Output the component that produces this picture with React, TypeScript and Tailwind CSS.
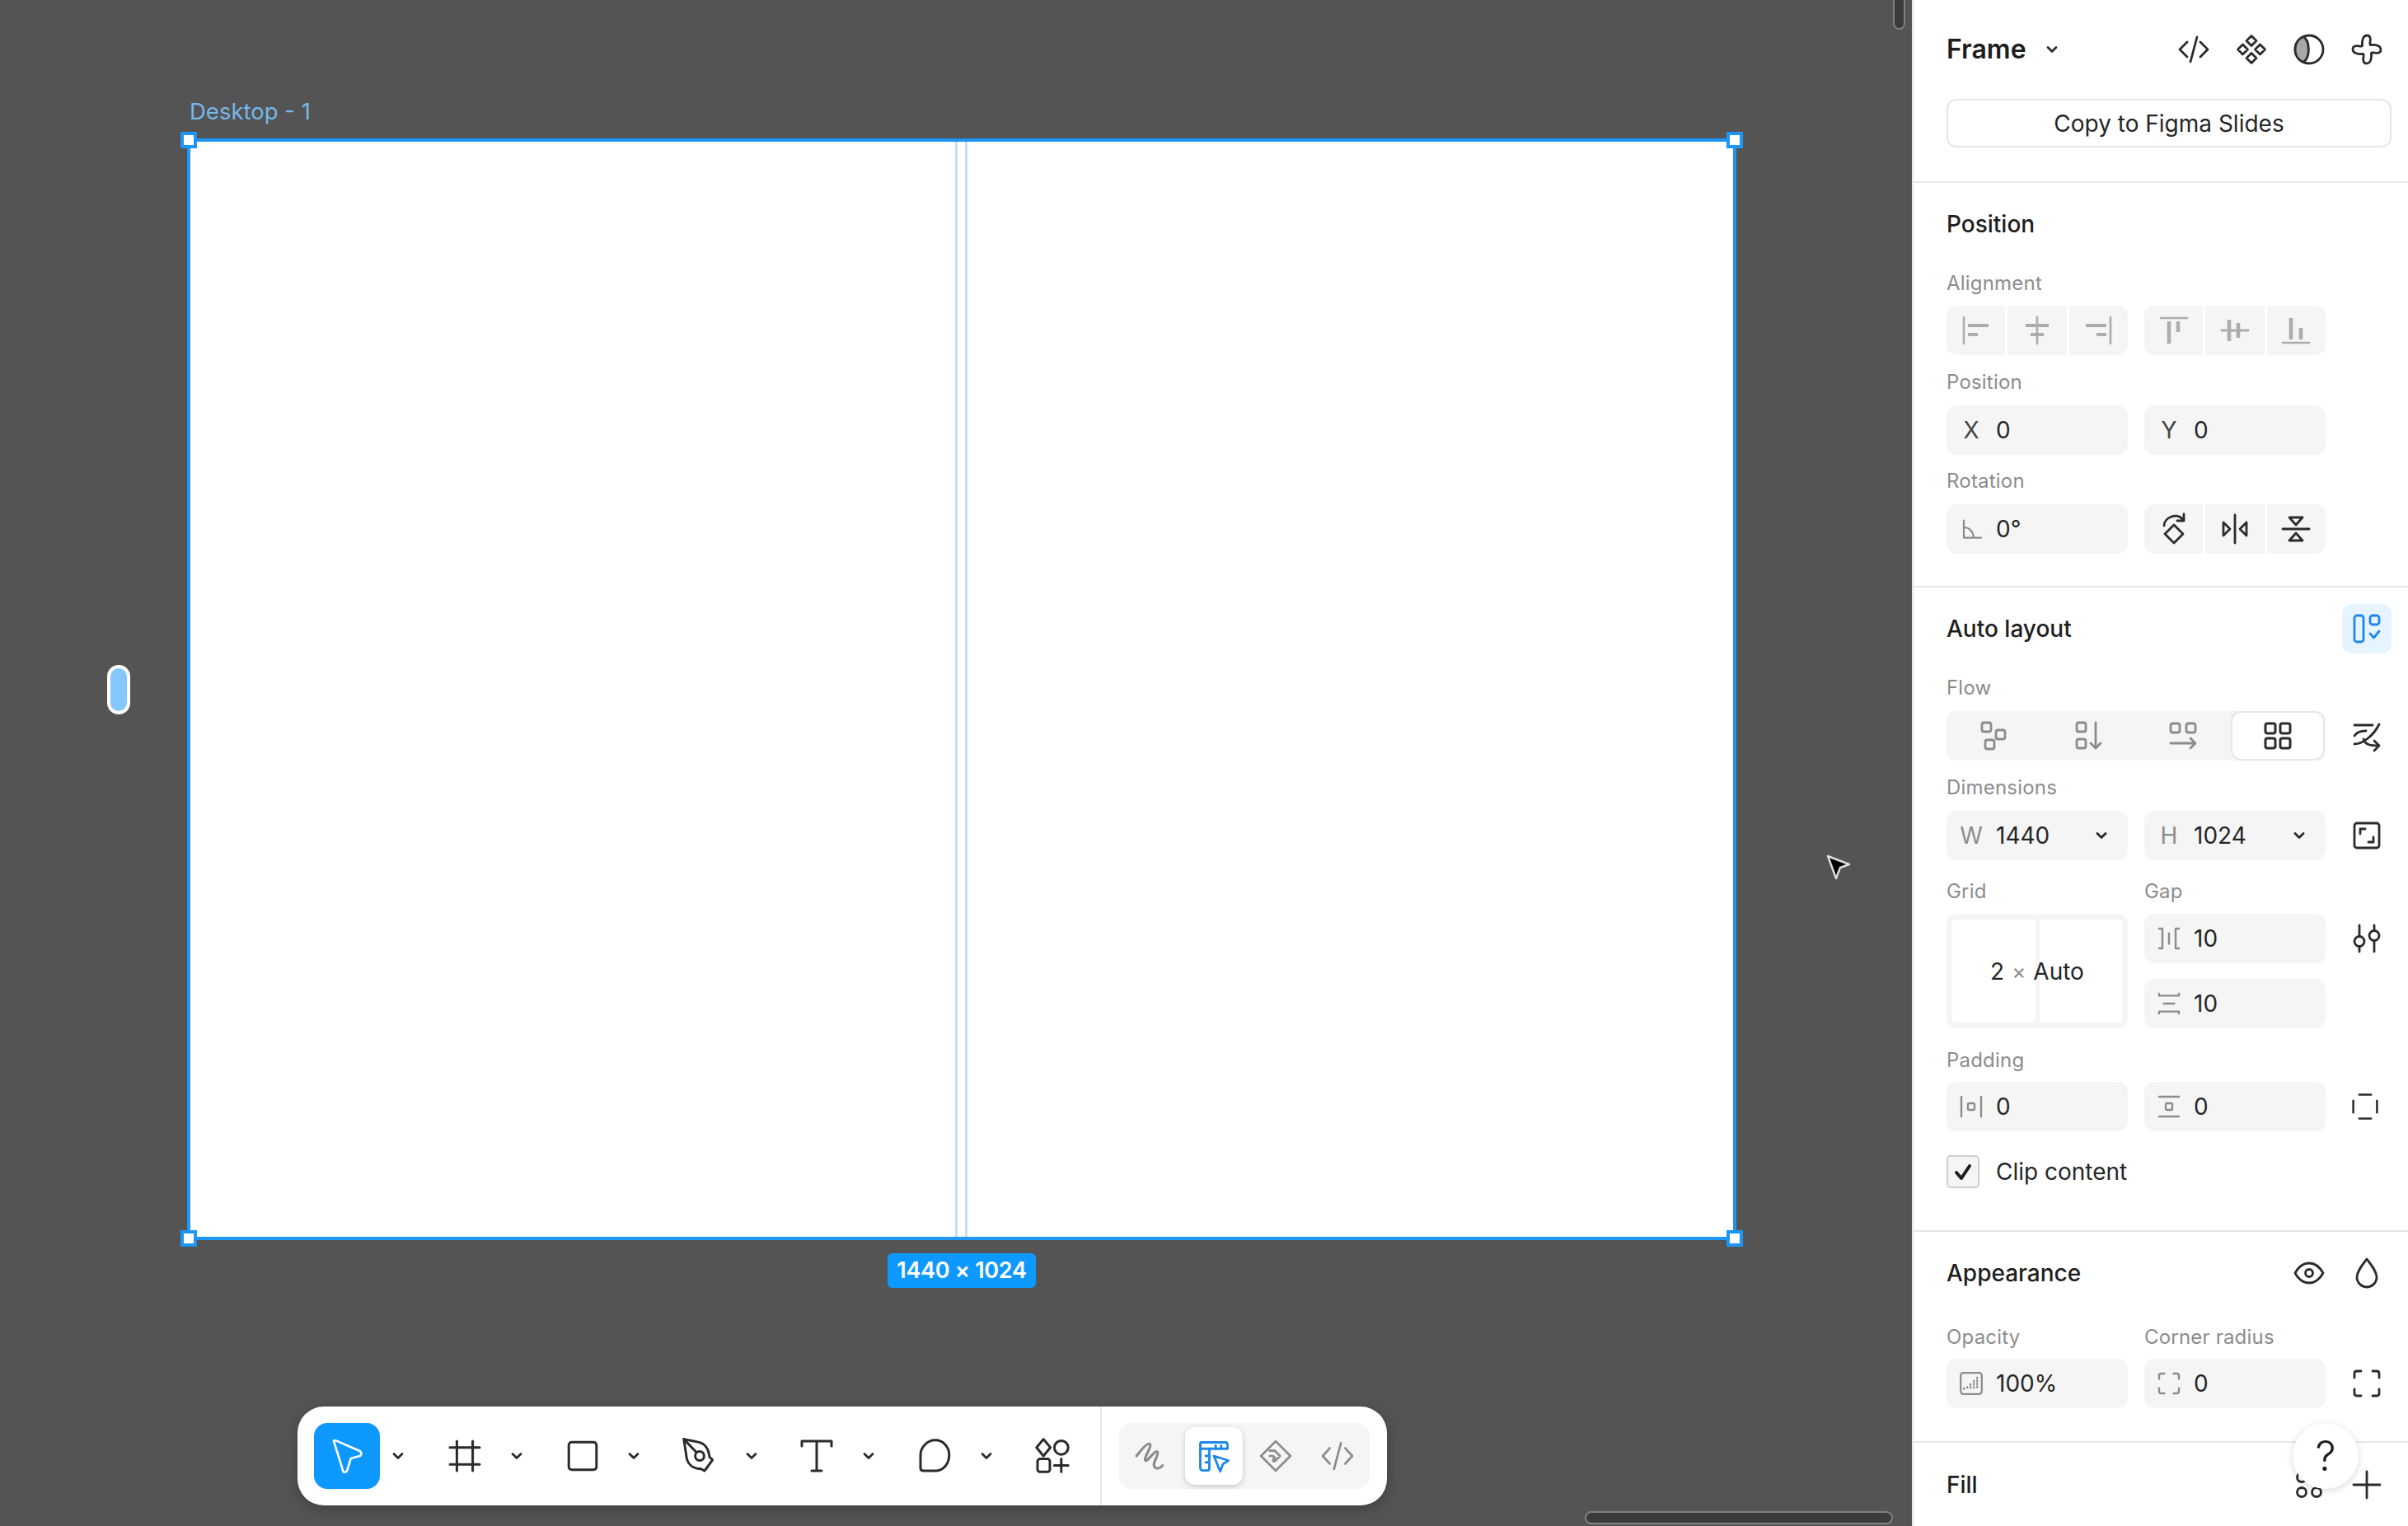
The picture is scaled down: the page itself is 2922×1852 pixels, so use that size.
import type { ReactNode } from "react";

const INK = "#2b2b2b";
const GREY = "#8c8c8c";
const LIGHT = "#adadad";
const BLUE = "#1e88ea";

// wrapper for all the hand drawn icons, drawn on a 40 unit box
function Ico({
  size = 40,
  color = INK,
  width = 2.8,
  children,
}: {
  size?: number;
  color?: string;
  width?: number;
  children: ReactNode;
}) {
  return (
    <svg
      width={size}
      height={size}
      viewBox="0 0 40 40"
      fill="none"
      stroke={color}
      strokeWidth={width}
      strokeLinecap="round"
      strokeLinejoin="round"
      className="shrink-0"
    >
      {children}
    </svg>
  );
}

function Chevron({ color = INK }: { color?: string }) {
  return (
    <svg width="14" height="10" viewBox="0 0 14 10" fill="none" stroke={color} strokeWidth="2.8" strokeLinecap="round" strokeLinejoin="round" className="shrink-0">
      <path d="M2 2.5 L7 7.5 L12 2.5" />
    </svg>
  );
}

function Label({ children }: { children: ReactNode }) {
  return <div className="h-[32px] flex items-center text-[24px] tracking-[0.2px] text-[#8c8c8c]">{children}</div>;
}

function Title({ children }: { children: ReactNode }) {
  return <div className="h-[40px] flex items-center text-[28px] font-[550] text-[#1e1e1e]">{children}</div>;
}

function Field({
  slot,
  value,
  chevron,
}: {
  slot: ReactNode;
  value: string;
  chevron?: boolean;
}) {
  return (
    <div className="w-[220px] h-[60px] shrink-0 flex items-center rounded-[12px] bg-[#f5f5f5]">
      <div className="w-[60px] shrink-0 flex items-center justify-center text-[28px]">{slot}</div>
      <div className="flex-1 text-[28px] text-[#262626]">{value}</div>
      {chevron && (
        <div className="mr-[25px]">
          <Chevron />
        </div>
      )}
    </div>
  );
}

function Segments({ items }: { items: ReactNode[] }) {
  return (
    <div className="w-[220px] h-[60px] shrink-0 flex gap-[3px] rounded-[12px] overflow-hidden">
      {items.map((it, i) => (
        <div key={i} className="flex-1 flex items-center justify-center bg-[#f5f5f5]">
          {it}
        </div>
      ))}
    </div>
  );
}

function Sq({ x, y, s = 10 }: { x: number; y: number; s?: number }) {
  return <rect x={x} y={y} width={s} height={s} rx="2.5" />;
}

function ToolChevron() {
  return (
    <div className="w-[14px] flex justify-center">
      <Chevron />
    </div>
  );
}

export default function App() {
  return (
    <div className="w-[2922px] h-[1852px] flex overflow-hidden bg-[#545454] font-['Inter',sans-serif]">
      {/* Canvas */}
      <div className="relative flex-1 bg-[#545454]">
        <div className="absolute left-[230px] top-[118px] text-[27.5px] leading-[34px] text-[#77b8e9]">Desktop - 1</div>

        <div className="absolute left-[227px] top-[168px] w-[1880px] h-[1337px] bg-white border-[4px] border-[#1e96f5]">
          <div className="absolute left-[928px] top-0 bottom-0 w-[3px] bg-[#bfe0fa]"></div>
          <div className="absolute left-[940px] top-0 bottom-0 w-[3px] bg-[#bfe0fa]"></div>
        </div>

        <div className="absolute left-[219px] top-[160px] w-[20px] h-[20px] bg-white border-[4px] border-[#1e96f5]"></div>
        <div className="absolute left-[2095px] top-[160px] w-[20px] h-[20px] bg-white border-[4px] border-[#1e96f5]"></div>
        <div className="absolute left-[219px] top-[1493px] w-[20px] h-[20px] bg-white border-[4px] border-[#1e96f5]"></div>
        <div className="absolute left-[2095px] top-[1493px] w-[20px] h-[20px] bg-white border-[4px] border-[#1e96f5]"></div>

        <div className="absolute left-[1077px] top-[1521px] w-[180px] h-[42px] flex items-center justify-center pt-[1px] rounded-[6px] bg-[#0d99ff] text-[27px] font-semibold tracking-[-0.3px] text-white">
          1440 × 1024
        </div>

        {/* comment pill */}
        <div className="absolute left-[130px] top-[807px] w-[28px] h-[60px] rounded-full bg-[#85c8ff] border-[4px] border-white"></div>

        {/* cursor */}
        <svg width="44" height="44" viewBox="0 0 44 44" className="absolute left-[2207px] top-[1028px]">
          <path d="M11 11 L37 21 L26 25 L21 38 Z" fill="#000" stroke="#dddddd" strokeWidth="2.5" strokeLinejoin="round" />
        </svg>

        {/* scrollbars */}
        <div className="absolute left-[2297px] top-[-20px] w-[15px] h-[56px] rounded-full bg-[#3b3b3b] border-2 border-[#808080]"></div>
        <div className="absolute left-[1923px] top-[1834px] w-[374px] h-[16px] rounded-full bg-[#3b3b3b] border-[2.5px] border-[#808080]"></div>

        {/* Toolbar */}
        <div className="absolute left-[361px] top-[1707px] w-[1322px] h-[120px] flex items-center rounded-[32px] bg-white shadow-[0_4px_16px_rgba(0,0,0,0.25)]">
          <div className="w-[976px] h-full shrink-0 flex items-center pl-[20px] border-r-2 border-[#e6e6e6]">
            <div className="w-[80px] h-[80px] shrink-0 flex items-center justify-center rounded-[16px] bg-[#0d99ff]">
              <Ico size={48} color="#fff" width={2.2}>
                <path d="M7 6 C6 5 7 3.5 9 4.5 L33 15 C35 16 35 19 33 20 L24 22.5 L20 35 C19 37 16.5 37 16 35 Z" />
              </Ico>
            </div>
            <div className="ml-[15px]">
              <ToolChevron />
            </div>
            <div className="ml-[50px]">
              <Ico size={48} width={2.5}>
                <path d="M12 5 V35 M28 5 V35 M5 11.5 H35 M5 28.5 H35" />
              </Ico>
            </div>
            <div className="ml-[32px]">
              <ToolChevron />
            </div>
            <div className="ml-[49px]">
              <Ico size={48} width={2.5}>
                <rect x="6" y="6" width="28" height="28" rx="3" />
              </Ico>
            </div>
            <div className="ml-[31px]">
              <ToolChevron />
            </div>
            <div className="ml-[49px]">
              <Ico size={48} width={2.5}>
                <path d="M4 3 L14 5 C19 6 26 6 29 16 L30 21 L33 24 L25 35 L21 33 C15 33 9 30 7 23 Z" />
                <path d="M4 3 L16.5 16" />
                <circle cx="20" cy="20" r="4.5" />
              </Ico>
            </div>
            <div className="ml-[32px]">
              <ToolChevron />
            </div>
            <div className="ml-[48px]">
              <Ico size={48} width={2.5}>
                <path d="M5 10 V5 H35 V10 M20 5 V35 M15 35 H25" />
              </Ico>
            </div>
            <div className="ml-[32px]">
              <ToolChevron />
            </div>
            <div className="ml-[50px]">
              <Ico size={48} width={2.5}>
                <path d="M20 4 C28 4 34 11 34 19 C34 28 28 35 20 35 H8 C6 35 5 34 5 32 V19 C5 11 12 4 20 4 Z" />
              </Ico>
            </div>
            <div className="ml-[31px]">
              <ToolChevron />
            </div>
            <div className="ml-[49px]">
              <Ico size={48} width={2.5}>
                <path d="M11 3 L18 11.5 L11 20 L4 11.5 Z" />
                <circle cx="29" cy="11.5" r="7" />
                <rect x="5" y="23" width="12.5" height="13" rx="2.5" />
                <path d="M29 23 V36 M22 29.5 H36" />
              </Ico>
            </div>
          </div>

          <div className="ml-[21px] w-[304px] h-[80px] shrink-0 flex items-center rounded-[16px] bg-[#f5f5f5]">
            <div className="w-[78px] flex justify-center">
              <Ico size={42} color={GREY} width={3}>
                <path d="M3 20 C9 12 15 5 18 6 C22 8 11 22 13 25 C15 28 24 13 27 15 C30 18 20 29 24 33 C26 35 30 35 33 31" />
              </Ico>
            </div>
            <div className="w-[70px] h-[70px] ml-[2px] flex items-center justify-center rounded-[12px] bg-white shadow-[0_2px_6px_rgba(0,0,0,0.18)]">
              <Ico size={44} color={BLUE} width={2.6}>
                <path d="M6 5 H33 C35 5 35 6 35 8 V12 H15 V34 C15 35 14 36 12 36 H8 C6 36 5 35 5 33 V7 C5 6 5 5 6 5 Z" />
                <path d="M5 12 H15 M22 12 V8.5 M28 12 V8.5 M15 20 H11 M15 27 H11" />
                <path d="M20 20 L36 25 L30 29 L27 37 Z" />
              </Ico>
            </div>
            <div className="w-[80px] flex justify-center">
              <Ico size={42} color={GREY} width={2.6}>
                <path d="M20 3 L37 20 L20 37 L3 20 Z" />
                <path d="M13 14 H19 L25 20 L19 26 H17 M13 20 H17 L19 22 L17 24" />
              </Ico>
            </div>
            <div className="w-[70px] flex justify-center">
              <Ico size={42} color={GREY} width={2.6}>
                <path d="M11 11 L3 20 L11 29 M29 11 L37 20 L29 29 M24 5 L16 35" />
              </Ico>
            </div>
          </div>
        </div>
      </div>

      {/* Right panel */}
      <aside className="relative w-[602px] h-[1852px] shrink-0 bg-white border-l-2 border-[#e6e6e6] overflow-hidden">
        {/* Header */}
        <section className="h-[222px] pt-[40px] px-[40px] pr-[20px] border-b-2 border-[#e6e6e6]">
          <div className="h-[40px] flex items-center">
            <span className="text-[32px] font-semibold text-[#1e1e1e]">Frame</span>
            <div className="ml-[24px]">
              <Chevron />
            </div>
            <div className="ml-auto flex items-center gap-[30px] pr-[10px]">
              <Ico>
                <path d="M12 11 L3 20 L12 29 M28 11 L37 20 L28 29 M24 5 L16 35" />
              </Ico>
              <Ico>
                <path d="M20 3.5 L26 9.5 L20 15.5 L14 9.5 Z M30.5 14 L36.5 20 L30.5 26 L24.5 20 Z M20 24.5 L26 30.5 L20 36.5 L14 30.5 Z M9.5 14 L15.5 20 L9.5 26 L3.5 20 Z" />
              </Ico>
              <Ico>
                <circle cx="20" cy="20" r="17" />
                <path d="M13 4.5 C21.5 10 21.5 30 13 35.5 C7 33 3 27 3 20 C3 13 7 7 13 4.5 Z" fill="#a8a8a8" />
              </Ico>
              <Ico>
                {[0, 90, 180, 270].map((r) => (
                  <path key={r} transform={`rotate(${r} 20 20)`} d="M14.5 15 C14 10 15 3 20.5 3 C24 3 25 7 24 11 C23.7 13 23.5 14.5 25 14.5" />
                ))}
              </Ico>
            </div>
          </div>
          <div className="mt-[40px] h-[59px] flex items-center justify-center rounded-[12px] border-2 border-[#e6e6e6] text-[28px] text-[#262626]">
            Copy to Figma Slides
          </div>
        </section>

        {/* Position */}
        <section className="h-[491px] pt-[30px] px-[40px] border-b-2 border-[#e6e6e6]">
          <Title>Position</Title>
          <div className="mt-[36px]">
            <Label>Alignment</Label>
          </div>
          <div className="mt-[11px] flex gap-[20px]">
            <Segments
              items={[
                <Ico key="l" color={LIGHT} width={2.6}>
                  <path d="M5 4 V36" />
                  <path d="M10 14 H35 M10 25 H22" strokeWidth="4" strokeLinecap="butt" />
                </Ico>,
                <Ico key="c" color={LIGHT} width={2.8}>
                  <path d="M20 4 V36" />
                  <path d="M6 14 H34 M12 25 H28" strokeWidth="4" strokeLinecap="butt" />
                </Ico>,
                <Ico key="r" color={LIGHT} width={2.6}>
                  <path d="M35 4 V36" />
                  <path d="M5 14 H30 M18 25 H30" strokeWidth="4" strokeLinecap="butt" />
                </Ico>,
              ]}
            />
            <Segments
              items={[
                <Ico key="t" color={LIGHT} width={2.6}>
                  <path d="M4 5 H36" />
                  <path d="M14 9 V36 M25 9 V22" strokeWidth="4.6" strokeLinecap="butt" />
                </Ico>,
                <Ico key="m" color={LIGHT} width={2.8}>
                  <path d="M4 20 H36" />
                  <path d="M13 7 V33 M24 11 V29" strokeWidth="4.6" strokeLinecap="butt" />
                </Ico>,
                <Ico key="b" color={LIGHT} width={2.6}>
                  <path d="M4 35 H36" />
                  <path d="M14 5 V31 M26 17 V31" strokeWidth="4.6" strokeLinecap="butt" />
                </Ico>,
              ]}
            />
          </div>
          <div className="mt-[17px]">
            <Label>Position</Label>
          </div>
          <div className="mt-[12px] flex gap-[20px]">
            <Field slot={<span className="text-[#444444]">X</span>} value="0" />
            <Field slot={<span className="text-[#444444]">Y</span>} value="0" />
          </div>
          <div className="mt-[16px]">
            <Label>Rotation</Label>
          </div>
          <div className="mt-[12px] flex gap-[20px]">
            <Field
              slot={
                <Ico size={30} color={GREY} width={3}>
                  <path d="M8 6 V34 H36 M8 17 C18 18 23 25 24 34" />
                </Ico>
              }
              value="0°"
            />
            <Segments
              items={[
                <Ico key="rot">
                  <path d="M20 15 L31 26 L20 37 L9 26 Z" />
                  <path d="M8 16 C8 6 24 -1 31 9 M32 2 L32 10 L24 10" />
                </Ico>,
                <Ico key="fh">
                  <path d="M20 3 V37 M6 12 L14 20 L6 28 Z M34 12 L26 20 L34 28 Z" />
                </Ico>,
                <Ico key="fv">
                  <path d="M4 20 H36 M12 6 H28 L20 15 Z M12 34 H28 L20 25 Z" />
                </Ico>,
              ]}
            />
          </div>
        </section>

        {/* Auto layout */}
        <section className="h-[782px] pt-[20px] pl-[40px] pr-[20px] border-b-2 border-[#e6e6e6]">
          <div className="h-[60px] flex items-center justify-between">
            <Title>Auto layout</Title>
            <div className="w-[60px] h-[60px] flex items-center justify-center rounded-[12px] bg-[#e5f4ff]">
              <Ico color={BLUE} width={2.8}>
                <rect x="5" y="4" width="11" height="32" rx="3" />
                <rect x="24" y="4" width="11" height="11" rx="3" />
                <path d="M24 26 L28.5 31 L35 23" />
              </Ico>
            </div>
          </div>
          <div className="mt-[26px]">
            <Label>Flow</Label>
          </div>
          <div className="mt-[12px] flex items-center">
            <div className="w-[460px] h-[60px] shrink-0 flex rounded-[12px] bg-[#f5f5f5]">
              <div className="w-[115px] flex items-center justify-center">
                <Ico color={GREY}>
                  <Sq x={5} y={4} s={11} />
                  <Sq x={22} y={13} s={11} />
                  <Sq x={9} y={25} s={11} />
                </Ico>
              </div>
              <div className="w-[115px] flex items-center justify-center">
                <Ico color={GREY}>
                  <Sq x={5} y={4} s={11} />
                  <Sq x={5} y={24} s={11} />
                  <path d="M28 4 V35 M22 29 L28 35 L34 29" />
                </Ico>
              </div>
              <div className="w-[115px] flex items-center justify-center">
                <Ico color={GREY}>
                  <Sq x={4} y={5} s={11} />
                  <Sq x={23} y={5} s={11} />
                  <path d="M4 29 H34 M28 23 L34 29 L28 35" />
                </Ico>
              </div>
              <div className="w-[114px] flex items-center justify-center rounded-[12px] bg-white border-2 border-[#e6e6e6]">
                <Ico width={3}>
                  <Sq x={5} y={5} s={12} />
                  <Sq x={23} y={5} s={12} />
                  <Sq x={5} y={23} s={12} />
                  <Sq x={23} y={23} s={12} />
                </Ico>
              </div>
            </div>
            <div className="ml-[30px]">
              <Ico>
                <path d="M5 7 H27 M5 30 C15 30 28 20 35 6 M5 20 C8 15 14 14 19 14 M16 24 C18 30 22 32 35 32 M29 26 L35 32 L29 38" />
              </Ico>
            </div>
          </div>
          <div className="mt-[17px]">
            <Label>Dimensions</Label>
          </div>
          <div className="mt-[12px] flex items-center gap-[20px]">
            <Field slot={<span className="text-[#8c8c8c]">W</span>} value="1440" chevron />
            <Field slot={<span className="text-[#8c8c8c]">H</span>} value="1024" chevron />
            <div className="ml-[10px]">
              <Ico>
                <rect x="5" y="5" width="30" height="30" rx="3" />
                <path d="M12 18 V12 H18 M28 22 V28 H22" />
              </Ico>
            </div>
          </div>
          <div className="mt-[22px] flex gap-[20px]">
            <div className="w-[220px]">
              <Label>Grid</Label>
            </div>
            <Label>Gap</Label>
          </div>
          <div className="mt-[11px] flex gap-[20px]">
            {/* grid preview */}
            <div className="relative w-[220px] h-[139px] shrink-0 flex gap-[5px] p-[7px] rounded-[12px] bg-[#f5f5f5]">
              <div className="flex-1 rounded-[4px] bg-white"></div>
              <div className="flex-1 rounded-[4px] bg-white"></div>
              <div className="absolute inset-0 flex items-center justify-center gap-[9px] text-[28px] text-[#262626]">
                <span>2</span>
                <span className="text-[26px] text-[#8c8c8c]">×</span>
                <span>Auto</span>
              </div>
            </div>
            <div className="w-[220px] flex flex-col justify-between">
              <Field
                slot={
                  <Ico size={32} color={GREY} width={3}>
                    <path d="M5 5 H10 V35 H5 M35 5 H30 V35 H35 M20 12 V28" />
                  </Ico>
                }
                value="10"
              />
              <Field
                slot={
                  <Ico size={32} color={GREY} width={3}>
                    <path d="M5 5 V8 H35 V5 M5 35 V32 H35 V35 M12 20 H28" />
                  </Ico>
                }
                value="10"
              />
            </div>
            <div className="ml-[10px] pt-[10px]">
              <Ico>
                <path d="M11 4 V17 M11 30 V36 M29 4 V10 M29 23 V36" />
                <circle cx="11" cy="23.5" r="6" />
                <circle cx="29" cy="16.5" r="6" />
              </Ico>
            </div>
          </div>
          <div className="mt-[23px]">
            <Label>Padding</Label>
          </div>
          <div className="mt-[10px] flex items-center gap-[20px]">
            <Field
              slot={
                <Ico size={32} color={GREY} width={3}>
                  <path d="M5 5 V35 M35 5 V35" />
                  <rect x="15" y="15" width="10" height="10" rx="1.5" />
                </Ico>
              }
              value="0"
            />
            <Field
              slot={
                <Ico size={32} color={GREY} width={3}>
                  <path d="M5 5 H35 M5 35 H35" />
                  <rect x="15" y="15" width="10" height="10" rx="1.5" />
                </Ico>
              }
              value="0"
            />
            <div className="ml-[10px]">
              <Ico size={36}>
                <path d="M12 4 H28 M12 36 H28 M4 12 V28 M36 12 V28" />
              </Ico>
            </div>
          </div>
          <div className="mt-[28px] flex items-center">
            <div className="w-[40px] h-[40px] flex items-center justify-center rounded-[5px] bg-[#f5f5f5] border-2 border-[#cfcfcf]">
              <svg width="24" height="24" viewBox="0 0 24 24" fill="none" stroke="#1e1e1e" strokeWidth="4" strokeLinecap="round" strokeLinejoin="round">
                <path d="M4 13 L10 20 L20 5" />
              </svg>
            </div>
            <span className="ml-[20px] text-[28px] text-[#262626]">Clip content</span>
          </div>
        </section>

        {/* Appearance */}
        <section className="h-[256px] pt-[30px] pl-[40px] pr-[20px] border-b-2 border-[#e6e6e6]">
          <div className="h-[40px] flex items-center justify-between">
            <Title>Appearance</Title>
            <div className="flex items-center gap-[30px] pr-[10px]">
              <Ico>
                <path d="M3 20 C8 11 14 8 20 8 C26 8 32 11 37 20 C32 29 26 32 20 32 C14 32 8 29 3 20 Z" />
                <circle cx="20" cy="20" r="4.5" />
              </Ico>
              <Ico>
                <path d="M20 3 C26 11 32 18 32 25 C32 32 26 37 20 37 C14 37 8 32 8 25 C8 18 14 11 20 3 Z" />
              </Ico>
            </div>
          </div>
          <div className="mt-[42px] flex gap-[20px]">
            <div className="w-[220px]">
              <Label>Opacity</Label>
            </div>
            <Label>Corner radius</Label>
          </div>
          <div className="mt-[10px] flex items-center gap-[20px]">
            <Field
              slot={
                <Ico size={32} color={GREY} width={2.8}>
                  <rect x="4" y="4" width="32" height="32" rx="4" />
                  <path d="M29 11 V29 M24 16 V29 M19 21 V29 M14 25 V29 M9 27 V29" strokeDasharray="1.5 3" />
                </Ico>
              }
              value="100%"
            />
            <Field
              slot={
                <Ico size={32} color={GREY} width={3}>
                  <path d="M5 13 V8 C5 6 6 5 8 5 H13 M27 5 H32 C34 5 35 6 35 8 V13 M35 27 V32 C35 34 34 35 32 35 H27 M13 35 H8 C6 35 5 34 5 32 V27" />
                </Ico>
              }
              value="0"
            />
            <div className="ml-[10px]">
              <Ico>
                <path d="M5 13 V8 C5 6 6 5 8 5 H13 M27 5 H32 C34 5 35 6 35 8 V13 M35 27 V32 C35 34 34 35 32 35 H27 M13 35 H8 C6 35 5 34 5 32 V27" />
              </Ico>
            </div>
          </div>
        </section>

        {/* Fill */}
        <section className="pt-[31px] pl-[40px] pr-[20px]">
          <div className="h-[40px] flex items-center justify-between">
            <Title>Fill</Title>
            <div className="flex items-center gap-[30px] pr-[10px]">
              <Ico>
                <circle cx="11" cy="11" r="5.5" />
                <circle cx="29" cy="11" r="5.5" />
                <circle cx="11" cy="29" r="5.5" />
                <circle cx="29" cy="29" r="5.5" />
              </Ico>
              <Ico>
                <path d="M20 4 V36 M4 20 H36" />
              </Ico>
            </div>
          </div>
        </section>

        {/* help button */}
        <div className="absolute left-[460px] top-[1727px] w-[80px] h-[80px] flex items-center justify-center rounded-full bg-white shadow-[0_2px_10px_rgba(0,0,0,0.15)] text-[50px] font-light text-[#1e1e1e]">
          ?
        </div>
      </aside>
    </div>
  );
}
